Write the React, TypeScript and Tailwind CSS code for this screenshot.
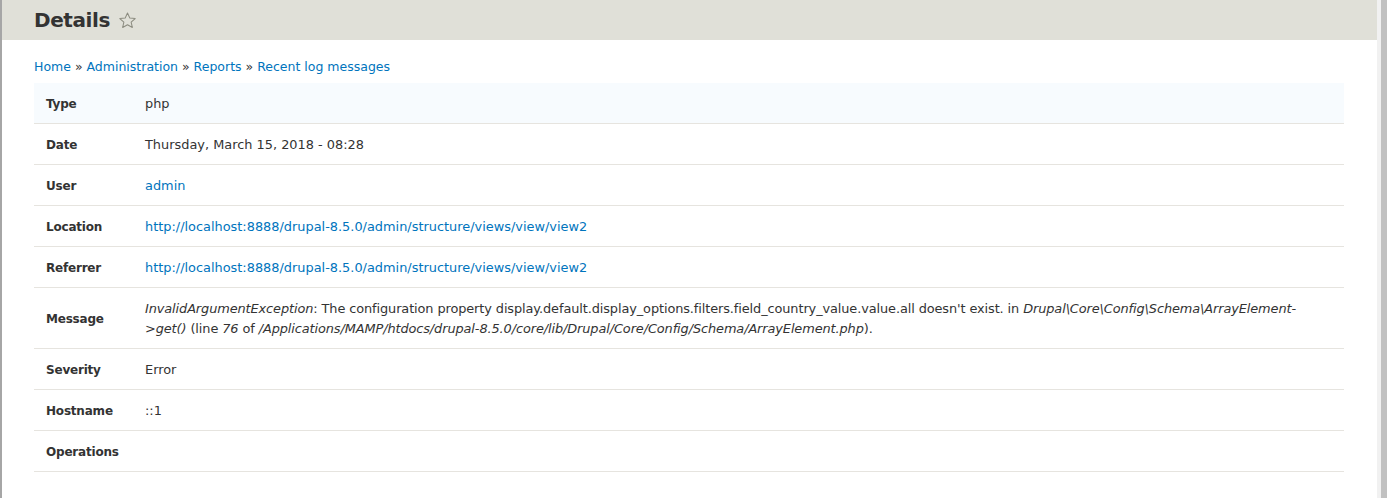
import React from "react"

const link = "text-[#0074bd]"

interface Row {
  label: string
  value: React.ReactNode
}

const rows: Row[] = [
  { label: "Type", value: "php" },
  { label: "Date", value: "Thursday, March 15, 2018 - 08:28" },
  { label: "User", value: <a className={link}>admin</a> },
  {
    label: "Location",
    value: <a className={link}>http://localhost:8888/drupal-8.5.0/admin/structure/views/view/view2</a>,
  },
  {
    label: "Referrer",
    value: <a className={link}>http://localhost:8888/drupal-8.5.0/admin/structure/views/view/view2</a>,
  },
  {
    label: "Message",
    value: (
      <div className="tracking-[-0.1px]">
        <em>InvalidArgumentException</em>: The configuration property
        display.default.display_options.filters.field_country_value.value.all doesn't exist. in{" "}
        <em>Drupal\Core\Config\Schema\ArrayElement-</em>
        <br />
        <em>&gt;get()</em> (line <em>76</em> of{" "}
        <em>/Applications/MAMP/htdocs/drupal-8.5.0/core/lib/Drupal/Core/Config/Schema/ArrayElement.php</em>).
      </div>
    ),
  },
  { label: "Severity", value: "Error" },
  { label: "Hostname", value: "::1" },
  { label: "Operations", value: "" },
]

export default function App() {
  return (
    <div className="flex h-[498px] w-[1387px] overflow-hidden bg-white font-['DejaVu_Sans',sans-serif] text-[#333]">
      <div className="w-[2px] shrink-0 bg-[#a6a6a6]" />
      <div className="flex min-w-0 flex-1 flex-col">
        <div className="flex h-[40px] items-center gap-[8px] bg-[#e0e0d8] pl-[32px]">
          <h1 className="text-[20px] font-bold tracking-[-0.4px] text-[#333]">Details</h1>
          <svg width="19" height="19" viewBox="0 0 24 24" className="mt-[1px]">
            <path
              d="M12 2.5l2.9 6.3 6.8.7-5.1 4.6 1.5 6.7L12 17.3l-6.1 3.5 1.5-6.7-5.1-4.6 6.8-.7z"
              fill="none"
              stroke="#8c8c80"
              strokeWidth="1.3"
              strokeLinejoin="round"
            />
          </svg>
        </div>
        <div className="px-[32px] pt-[18px]">
          <div className="text-[12.5px] leading-[17px]">
            <a className={link}>Home</a> » <a className={link}>Administration</a> »{" "}
            <a className={link}>Reports</a> » <a className={link}>Recent log messages</a>
          </div>
          <table className="mt-[8px] w-[1310px] border-collapse text-[12.9px] leading-[20px]">
            <tbody>
              {rows.map((r, i) => (
                <tr key={r.label} className={`border-b border-[#e6e4df] ${i === 0 ? "bg-[#f7fbfe]" : ""}`}>
                  <th className="w-[111px] pt-[11px] pb-[9px] pl-[12px] text-left align-middle text-[12px] font-bold tracking-[-0.2px]">
                    {r.label}
                  </th>
                  <td className="pt-[11px] pb-[9px] pr-[12px] align-middle">{r.value}</td>
                </tr>
              ))}
            </tbody>
          </table>
        </div>
      </div>
      <div className="w-[4px] shrink-0 bg-[#f1f1f1]" />
      <div className="w-[6px] shrink-0 bg-[#c1c1c1]" />
    </div>
  )
}
